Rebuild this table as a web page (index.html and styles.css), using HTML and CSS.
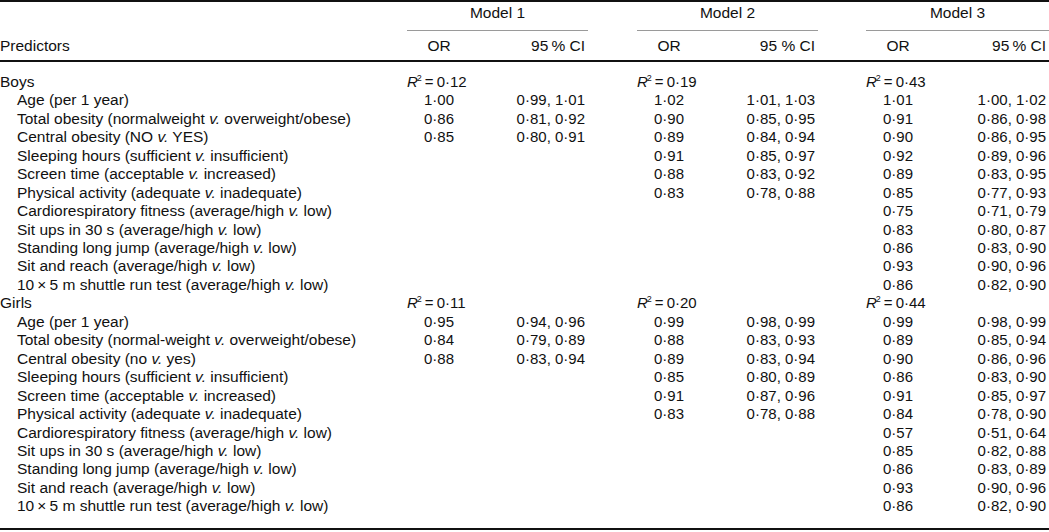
FILE: index.html
```html
<!DOCTYPE html>
<html>
<head>
<meta charset="utf-8">
<link rel="stylesheet" href="styles.css">
</head>
<body>
<table class="tbl">
  <colgroup>
    <col class="c-pred"><col class="c-or"><col class="c-ci"><col class="c-gap">
    <col class="c-or"><col class="c-ci"><col class="c-gap2"><col class="c-or"><col class="c-ci3">
  </colgroup>
  <thead>
    <tr class="h1">
      <th></th>
      <th colspan="2" class="model">Model 1</th>
      <th></th>
      <th colspan="2" class="model">Model 2</th>
      <th></th>
      <th colspan="2" class="model">Model 3</th>
    </tr>
    <tr class="h2">
      <th class="pred">Predictors</th>
      <th class="or">OR</th><th class="ci">95&#8201;% CI</th><th></th>
      <th class="or">OR</th><th class="ci">95 % CI</th><th></th>
      <th class="or">OR</th><th class="ci">95&#8201;% CI</th>
    </tr>
  </thead>
  <tbody>
    <tr class="first">
      <td class="grp">Boys</td>
      <td colspan="2" class="r2"><i>R</i><sup>2</sup>&#8201;=&#8201;0·12</td><td></td>
      <td colspan="2" class="r2"><i>R</i><sup>2</sup>&#8201;=&#8201;0·19</td><td></td>
      <td colspan="2" class="r2"><i>R</i><sup>2</sup>&#8201;=&#8201;0·43</td>
    </tr>
    <tr><td class="sub">Age (per 1 year)</td><td class="or">1·00</td><td class="ci">0·99, 1·01</td><td></td><td class="or">1·02</td><td class="ci">1·01, 1·03</td><td></td><td class="or">1·01</td><td class="ci">1·00, 1·02</td></tr>
    <tr><td class="sub">Total obesity (normalweight <i>v.</i> overweight/obese)</td><td class="or">0·86</td><td class="ci">0·81, 0·92</td><td></td><td class="or">0·90</td><td class="ci">0·85, 0·95</td><td></td><td class="or">0·91</td><td class="ci">0·86, 0·98</td></tr>
    <tr><td class="sub">Central obesity (NO <i>v.</i> YES)</td><td class="or">0·85</td><td class="ci">0·80, 0·91</td><td></td><td class="or">0·89</td><td class="ci">0·84, 0·94</td><td></td><td class="or">0·90</td><td class="ci">0·86, 0·95</td></tr>
    <tr><td class="sub">Sleeping hours (sufficient <i>v.</i> insufficient)</td><td class="or"></td><td class="ci"></td><td></td><td class="or">0·91</td><td class="ci">0·85, 0·97</td><td></td><td class="or">0·92</td><td class="ci">0·89, 0·96</td></tr>
    <tr><td class="sub">Screen time (acceptable <i>v.</i> increased)</td><td class="or"></td><td class="ci"></td><td></td><td class="or">0·88</td><td class="ci">0·83, 0·92</td><td></td><td class="or">0·89</td><td class="ci">0·83, 0·95</td></tr>
    <tr><td class="sub">Physical activity (adequate <i>v.</i> inadequate)</td><td class="or"></td><td class="ci"></td><td></td><td class="or">0·83</td><td class="ci">0·78, 0·88</td><td></td><td class="or">0·85</td><td class="ci">0·77, 0·93</td></tr>
    <tr><td class="sub">Cardiorespiratory fitness (average/high <i>v.</i> low)</td><td class="or"></td><td class="ci"></td><td></td><td class="or"></td><td class="ci"></td><td></td><td class="or">0·75</td><td class="ci">0·71, 0·79</td></tr>
    <tr><td class="sub">Sit ups in 30 s (average/high <i>v.</i> low)</td><td class="or"></td><td class="ci"></td><td></td><td class="or"></td><td class="ci"></td><td></td><td class="or">0·83</td><td class="ci">0·80, 0·87</td></tr>
    <tr><td class="sub">Standing long jump (average/high <i>v.</i> low)</td><td class="or"></td><td class="ci"></td><td></td><td class="or"></td><td class="ci"></td><td></td><td class="or">0·86</td><td class="ci">0·83, 0·90</td></tr>
    <tr><td class="sub">Sit and reach (average/high <i>v.</i> low)</td><td class="or"></td><td class="ci"></td><td></td><td class="or"></td><td class="ci"></td><td></td><td class="or">0·93</td><td class="ci">0·90, 0·96</td></tr>
    <tr><td class="sub">10&#8201;×&#8201;5 m shuttle run test (average/high <i>v.</i> low)</td><td class="or"></td><td class="ci"></td><td></td><td class="or"></td><td class="ci"></td><td></td><td class="or">0·86</td><td class="ci">0·82, 0·90</td></tr>
    <tr>
      <td class="grp">Girls</td>
      <td colspan="2" class="r2"><i>R</i><sup>2</sup>&#8201;=&#8201;0·11</td><td></td>
      <td colspan="2" class="r2"><i>R</i><sup>2</sup>&#8201;=&#8201;0·20</td><td></td>
      <td colspan="2" class="r2"><i>R</i><sup>2</sup>&#8201;=&#8201;0·44</td>
    </tr>
    <tr><td class="sub">Age (per 1 year)</td><td class="or">0·95</td><td class="ci">0·94, 0·96</td><td></td><td class="or">0·99</td><td class="ci">0·98, 0·99</td><td></td><td class="or">0·99</td><td class="ci">0·98, 0·99</td></tr>
    <tr><td class="sub">Total obesity (normal-weight <i>v.</i> overweight/obese)</td><td class="or">0·84</td><td class="ci">0·79, 0·89</td><td></td><td class="or">0·88</td><td class="ci">0·83, 0·93</td><td></td><td class="or">0·89</td><td class="ci">0·85, 0·94</td></tr>
    <tr><td class="sub">Central obesity (no <i>v.</i> yes)</td><td class="or">0·88</td><td class="ci">0·83, 0·94</td><td></td><td class="or">0·89</td><td class="ci">0·83, 0·94</td><td></td><td class="or">0·90</td><td class="ci">0·86, 0·96</td></tr>
    <tr><td class="sub">Sleeping hours (sufficient <i>v.</i> insufficient)</td><td class="or"></td><td class="ci"></td><td></td><td class="or">0·85</td><td class="ci">0·80, 0·89</td><td></td><td class="or">0·86</td><td class="ci">0·83, 0·90</td></tr>
    <tr><td class="sub">Screen time (acceptable <i>v.</i> increased)</td><td class="or"></td><td class="ci"></td><td></td><td class="or">0·91</td><td class="ci">0·87, 0·96</td><td></td><td class="or">0·91</td><td class="ci">0·85, 0·97</td></tr>
    <tr><td class="sub">Physical activity (adequate <i>v.</i> inadequate)</td><td class="or"></td><td class="ci"></td><td></td><td class="or">0·83</td><td class="ci">0·78, 0·88</td><td></td><td class="or">0·84</td><td class="ci">0·78, 0·90</td></tr>
    <tr><td class="sub">Cardiorespiratory fitness (average/high <i>v.</i> low)</td><td class="or"></td><td class="ci"></td><td></td><td class="or"></td><td class="ci"></td><td></td><td class="or">0·57</td><td class="ci">0·51, 0·64</td></tr>
    <tr><td class="sub">Sit ups in 30 s (average/high <i>v.</i> low)</td><td class="or"></td><td class="ci"></td><td></td><td class="or"></td><td class="ci"></td><td></td><td class="or">0·85</td><td class="ci">0·82, 0·88</td></tr>
    <tr><td class="sub">Standing long jump (average/high <i>v.</i> low)</td><td class="or"></td><td class="ci"></td><td></td><td class="or"></td><td class="ci"></td><td></td><td class="or">0·86</td><td class="ci">0·83, 0·89</td></tr>
    <tr><td class="sub">Sit and reach (average/high <i>v.</i> low)</td><td class="or"></td><td class="ci"></td><td></td><td class="or"></td><td class="ci"></td><td></td><td class="or">0·93</td><td class="ci">0·90, 0·96</td></tr>
    <tr class="last"><td class="sub">10&#8201;×&#8201;5 m shuttle run test (average/high <i>v.</i> low)</td><td class="or"></td><td class="ci"></td><td></td><td class="or"></td><td class="ci"></td><td></td><td class="or">0·86</td><td class="ci">0·82, 0·90</td></tr>
  </tbody>
</table>
</body>
</html>
```
FILE: styles.css
```css
html, body {
  margin: 0;
  padding: 0;
  background: #fff;
}
body {
  font-family: "Liberation Sans", Arial, Helvetica, sans-serif;
  font-size: 15.5px;
  color: #111;
}
.tbl {
  width: 1049px;
  border-collapse: separate;
  border-spacing: 0;
  table-layout: fixed;
  border-top: 2px solid #111;
  border-bottom: 2px solid #111;
}
.c-pred { width: 407px; }
.c-or { width: 64px; }
.c-ci { width: 117px; }
.c-gap { width: 49px; }
.c-gap2 { width: 48px; }
.c-ci3 { width: 119px; }

th, td {
  padding: 0;
  height: 18.45px;
  font-weight: normal;
  line-height: 18.45px;
  white-space: nowrap;
  vertical-align: middle;
}
.h1 th {
  padding-top: 2px;
  padding-bottom: 8px;
}
.h1 .model {
  text-align: center;
  border-bottom: 1px solid #9a9a9a;
}
.h2 th {
  padding-top: 6px;
  padding-bottom: 4px;
  border-bottom: 2px solid #111;
}
.h2 .pred { text-align: left; }
.or { text-align: center; font-size: 15px; }
.ci { text-align: right; font-size: 15px; }
.ci::after {
  content: "";
  display: inline-block;
  width: 3px;
}
th.or, th.ci { font-size: 15.5px; }
.grp { text-align: left; }
.sub { text-align: left; text-indent: 17px; }
.r2 { text-align: left; font-size: 15px; }
.r2 sup {
  font-size: 9px;
  line-height: 0;
  vertical-align: 6px;
  margin-left: -1px;
}
.tbl .first td { padding-top: 11px; }
.tbl .last td { padding-bottom: 12px; }
```
